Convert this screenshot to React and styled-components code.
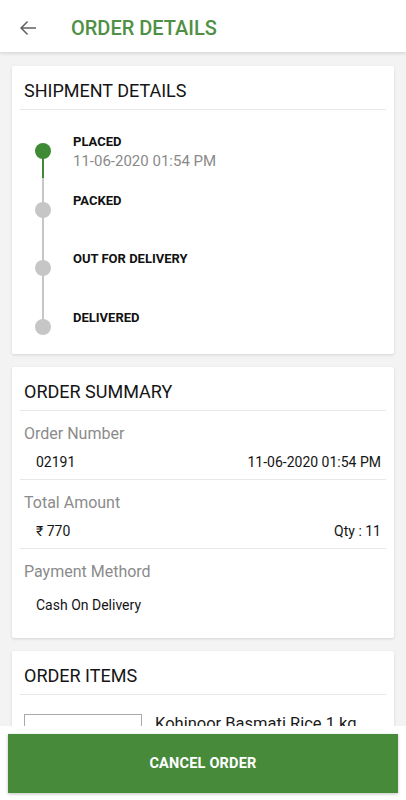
import { createGlobalStyle, styled } from "styled-components";

const GlobalStyle = createGlobalStyle`
  * { box-sizing: border-box; }
  body {
    margin: 0;
    background: #f3f3f3;
    font-family: Roboto, "Noto Sans", Arial, sans-serif;
    color: #1a1a1a;
  }
`;

const Page = styled.div`
  min-height: 800px;
  padding-bottom: 90px;
`;

const Header = styled.header`
  height: 52px;
  padding-top: 3px;
  background: #ffffff;
  display: flex;
  align-items: center;
  box-shadow: 0 2px 3px rgba(0, 0, 0, 0.1);
  position: relative;
  z-index: 2;
`;

const BackButton = styled.button`
  border: none;
  background: none;
  padding: 0;
  margin-left: 16px;
  width: 24px;
  height: 24px;
  display: flex;
  color: #606060;
`;

const Title = styled.h1`
  margin: 0 0 0 31px;
  font-size: 20px;
  font-weight: 500;
  color: #4f9044;
  letter-spacing: 0;
`;

const Main = styled.main`
  padding: 14px 12px;
  display: flex;
  flex-direction: column;
  gap: 13px;
`;

const Card = styled.section`
  background: #ffffff;
  border-radius: 2px;
  box-shadow: 0 1px 3px rgba(0, 0, 0, 0.13);
  padding: 0 8px;
`;

const CardTitle = styled.h2`
  margin: 0;
  padding: 13px 4px 6px;
  font-size: 18px;
  line-height: 24px;
  font-weight: 400;
  color: #151515;
`;

const Divider = styled.hr`
  margin: 0;
  border: none;
  height: 1px;
  background: #e8e8e8;
`;

const Steps = styled.div`
  padding-top: 23px;
  padding-bottom: 19px;
`;

const Step = styled.div`
  display: flex;
  height: ${(p) => (p.$last ? "26px" : "58.5px")};
`;

const Rail = styled.div`
  position: relative;
  width: 46px;
  flex: none;

  &::before {
    content: "";
    position: absolute;
    left: 22px;
    width: 2px;
    top: ${(p) => (p.$first ? "18px" : "0")};
    height: ${(p) => (p.$last ? "18px" : "auto")};
    bottom: ${(p) => (p.$last ? "auto" : "0")};
    background: ${(p) =>
      p.$first
        ? "linear-gradient(#3f8a35 0 27px, #c6c6c6 27px)"
        : "#c6c6c6"};
  }
`;

const Dot = styled.span`
  position: absolute;
  left: 15px;
  top: 10px;
  width: 16px;
  height: 16px;
  border-radius: 50%;
  background: ${(p) => (p.$done ? "#3f8a35" : "#c6c6c6")};
`;

const StepText = styled.div`
  margin-left: 7px;
`;

const StepLabel = styled.div`
  font-size: 13px;
  line-height: 18px;
  font-weight: 700;
  color: #111111;
`;

const StepDate = styled.div`
  font-size: 15px;
  line-height: 20px;
  color: #8a8a8a;
`;

const InfoBlock = styled.div`
  padding: 13px 4px ${(p) => p.$pad || "7px"};
  border-bottom: ${(p) => (p.$last ? "none" : "1px solid #e8e8e8")};
`;

const InfoLabel = styled.div`
  font-size: 16px;
  line-height: 20px;
  color: #8b8b8b;
`;

const InfoRow = styled.div`
  margin-top: ${(p) => p.$gap || "8px"};
  padding: 0 1px 0 12px;
  display: flex;
  justify-content: space-between;
  font-size: 14px;
  line-height: 20px;
  color: #151515;
`;

const Item = styled.div`
  display: flex;
  gap: 13px;
  padding: 19px 4px 20px;
`;

const ItemImage = styled.div`
  width: 118px;
  height: 96px;
  flex: none;
  border: 1px solid #a9a9a9;
  background: #ffffff;
`;

const ItemInfo = styled.div`
  display: flex;
  flex-direction: column;
  gap: 6px;
  font-size: 16.5px;
  color: #1a1a1a;
`;

const ItemMeta = styled.div`
  font-size: 14px;
  color: #8b8b8b;
`;

const Footer = styled.footer`
  position: fixed;
  left: 0;
  right: 0;
  bottom: 0;
  height: 74px;
  padding: 8px 8px 7px;
  background: #ffffff;
  z-index: 3;
`;

const CancelButton = styled.button`
  width: 100%;
  height: 59px;
  border: none;
  border-radius: 0;
  background: #468a3a;
  color: #ffffff;
  font-family: inherit;
  font-size: 14.5px;
  font-weight: 700;
  letter-spacing: 0.2px;
  box-shadow: 0 1px 3px rgba(0, 0, 0, 0.25);
`;

const steps = [
  { label: "PLACED", date: "11-06-2020 01:54 PM", done: true },
  { label: "PACKED" },
  { label: "OUT FOR DELIVERY" },
  { label: "DELIVERED" },
];

export default function App() {
  return (
    <Page>
      <GlobalStyle />
      <Header>
        <BackButton aria-label="Back">
          <svg width="24" height="24" viewBox="0 0 24 24" fill="currentColor">
            <path d="M20 11.25H6.9l5.2-5.2-1.05-1.05L4 12l7.05 7 1.05-1.05-5.2-5.2H20z" />
          </svg>
        </BackButton>
        <Title>ORDER DETAILS</Title>
      </Header>

      <Main>
        <Card>
          <CardTitle>SHIPMENT DETAILS</CardTitle>
          <Divider />
          <Steps>
            {steps.map((s, i) => (
              <Step key={s.label} $last={i === steps.length - 1}>
                <Rail $first={i === 0} $last={i === steps.length - 1}>
                  <Dot $done={s.done} />
                </Rail>
                <StepText>
                  <StepLabel>{s.label}</StepLabel>
                  {s.date && <StepDate>{s.date}</StepDate>}
                </StepText>
              </Step>
            ))}
          </Steps>
        </Card>

        <Card>
          <CardTitle>ORDER SUMMARY</CardTitle>
          <Divider />
          <InfoBlock>
            <InfoLabel>Order Number</InfoLabel>
            <InfoRow>
              <span>02191</span>
              <span>11-06-2020 01:54 PM</span>
            </InfoRow>
          </InfoBlock>
          <InfoBlock>
            <InfoLabel>Total Amount</InfoLabel>
            <InfoRow>
              <span>₹ 770</span>
              <span>Qty : 11</span>
            </InfoRow>
          </InfoBlock>
          <InfoBlock $last $pad="23px">
            <InfoLabel>Payment Methord</InfoLabel>
            <InfoRow $gap="13px">
              <span>Cash On Delivery</span>
            </InfoRow>
          </InfoBlock>
        </Card>

        <Card>
          <CardTitle>ORDER ITEMS</CardTitle>
          <Divider />
          <Item>
            <ItemImage />
            <ItemInfo>
              <span>Kohinoor Basmati Rice 1 kg</span>
              <ItemMeta>Qty : 1</ItemMeta>
              <ItemMeta>₹ 70</ItemMeta>
            </ItemInfo>
          </Item>
        </Card>
      </Main>

      <Footer>
        <CancelButton>CANCEL ORDER</CancelButton>
      </Footer>
    </Page>
  );
}
